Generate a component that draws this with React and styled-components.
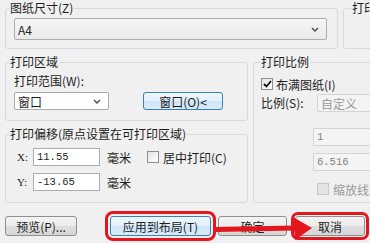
import styled, { createGlobalStyle } from 'styled-components'

const Global = createGlobalStyle`
  html, body {
    margin: 0;
    padding: 0;
    background: #f0f0f0;
  }
  body {
    font-family: "Noto Sans CJK SC", "Noto Sans", sans-serif;
    font-size: 12px;
    color: #1e1e1e;
  }
`

const Dialog = styled.div`
  position: relative;
  width: 370px;
  height: 243px;
  overflow: hidden;
  box-sizing: border-box;
  padding: 1px 0 0 5px;
  background: #f0f0f0;
`

const TopRow = styled.div`
  display: flex;
  gap: 5px;
  width: 480px;
`

const Middle = styled.div`
  display: grid;
  grid-template-columns: 243px 160px;
  column-gap: 5px;
  margin-top: 6px;
`

const Column = styled.div`
  display: flex;
  flex-direction: column;
  gap: 6px;
`

const Group = styled.fieldset`
  margin: 0;
  padding: 0;
  min-width: 0;
  width: ${p => p.$w}px;
  box-sizing: border-box;
  border: 1px solid #d6dadf;
  border-radius: 3px;
`

const Legend = styled.legend`
  margin-left: ${p => p.$indent ?? 3}px;
  padding: 0 1px;
  font-size: 12px;
  line-height: 14px;
  color: #1e1e1e;
`

const Body = styled.div`
  padding: ${p => p.$pad};
`

const Label = styled.div`
  line-height: 14px;
  white-space: nowrap;
`

const Row = styled.div`
  display: flex;
  align-items: center;
  height: ${p => p.$h ?? 18}px;
  margin-top: ${p => p.$mt ?? 0}px;
  padding-left: ${p => p.$pl ?? 0}px;
  white-space: nowrap;
`

const Combo = styled.div`
  display: flex;
  align-items: center;
  justify-content: space-between;
  flex: none;
  width: ${p => p.$w}px;
  height: ${p => p.$h ?? 18}px;
  box-sizing: border-box;
  margin-left: ${p => p.$ml ?? 0}px;
  padding: 0 7px 0 3px;
  border: 1px solid ${p => (p.$disabled ? '#d4d4d4' : '#acacac')};
  border-radius: 2px;
  background: ${p =>
    p.$disabled ? '#f4f4f4' : p.$flat ? '#ffffff' : 'linear-gradient(#f6f6f6, #e9e9e9)'};
  color: ${p => (p.$disabled ? '#9a9a9a' : '#1e1e1e')};
  font-family: ${p => (p.$mono ? '"Liberation Mono", monospace' : 'inherit')};
  font-size: ${p => (p.$mono ? '11px' : '12px')};
`

const Field = styled.input`
  flex: none;
  width: ${p => p.$w}px;
  height: 18px;
  box-sizing: border-box;
  margin: 0 0 0 ${p => p.$ml ?? 0}px;
  padding: 0 0 0 3px;
  border: 1px solid ${p => (p.$disabled ? '#d4d4d4' : '#abadb3')};
  background: ${p => (p.$disabled ? '#f4f4f4' : '#ffffff')};
  color: ${p => (p.$disabled ? '#808080' : '#1e1e1e')};
  font-family: "Liberation Mono", monospace;
  font-size: 10.5px;
  outline: none;
`

const AxisLabel = styled.span`
  width: 16px;
  font-family: "Liberation Serif", serif;
  font-size: 11px;
`

const Unit = styled.span`
  margin-left: ${p => p.$ml ?? 7}px;
  color: ${p => (p.$disabled ? '#9a9a9a' : '#1e1e1e')};
`

const Box = styled.span`
  display: inline-flex;
  align-items: center;
  justify-content: center;
  flex: none;
  width: 12px;
  height: 12px;
  box-sizing: border-box;
  margin-left: ${p => p.$ml ?? 0}px;
  border: 1px solid ${p => (p.$disabled ? '#c8c8c8' : '#8e8f8f')};
  background: ${p => (p.$disabled ? '#e4e4e4' : 'linear-gradient(135deg, #e2e2e2, #ffffff)')};
`

const Button = styled.div`
  display: flex;
  align-items: center;
  justify-content: center;
  flex: none;
  width: ${p => p.$w}px;
  height: ${p => p.$h ?? 20}px;
  box-sizing: border-box;
  margin-left: ${p => p.$ml ?? 0}px;
  border: 1px solid ${p => (p.$focus ? '#3c7fb1' : '#8f8f8f')};
  border-radius: 3px;
  background: ${p =>
    p.$focus
      ? 'linear-gradient(#eef6fd 0%, #e2f0fb 50%, #cfe6f8 51%, #d7ebfa 100%)'
      : 'linear-gradient(#f4f4f4 0%, #ececec 50%, #dedede 51%, #d6d6d6 100%)'};
  color: #1e1e1e;
  font-size: 12px;
  white-space: nowrap;
  outline: ${p => (p.$mark ? '3px solid #e3151d' : 'none')};
  outline-offset: ${p => p.$offset ?? 2}px;
`

const Buttons = styled.div`
  display: flex;
  align-items: center;
  margin-top: 13px;
`

const Overlay = styled.svg`
  position: absolute;
  left: 0;
  top: 0;
  pointer-events: none;
`

function Chevron() {
  return (
    <svg width="8" height="5" viewBox="0 0 8 5">
      <path d="M1 1l3 3 3-3" stroke="#4a4a4a" strokeWidth="1.4" fill="none" />
    </svg>
  )
}

function Tick() {
  return (
    <svg width="9" height="8" viewBox="0 0 9 8">
      <path d="M1 4l2.5 2.5L8 1" stroke="#111" strokeWidth="1.8" fill="none" />
    </svg>
  )
}

export default function App() {
  return (
    <Dialog>
      <Global />
      <TopRow>
        <Group $w={333}>
          <Legend>图纸尺寸(Z)</Legend>
          <Body $pad="3px 10px 8px 8px">
            <Combo $w={313} $h={22}>
              A4
              <Chevron />
            </Combo>
          </Body>
        </Group>
        <Group $w={80}>
          <Legend $indent={7}>打印</Legend>
        </Group>
      </TopRow>

      <Middle>
        <Column>
          <Group>
            <Legend>打印区域</Legend>
            <Body $pad="5px 8px 10px 8px">
              <Label>打印范围(W):</Label>
              <Row $mt={4}>
                <Combo $w={95} $flat>
                  窗口
                  <Chevron />
                </Combo>
                <Button $w={80} $h={18} $ml={34} $focus>
                  窗口(O)&lt;
                </Button>
              </Row>
            </Body>
          </Group>
          <Group>
            <Legend>打印偏移(原点设置在可打印区域)</Legend>
            <Body $pad="7px 8px 11px 11px">
              <Row>
                <AxisLabel>X:</AxisLabel>
                <Field $w={67} readOnly value="11.55" />
                <Unit>毫米</Unit>
                <Box $ml={16} />
                <Unit $ml={4}>居中打印(C)</Unit>
              </Row>
              <Row $mt={7}>
                <AxisLabel>Y:</AxisLabel>
                <Field $w={67} readOnly value="-13.65" />
                <Unit>毫米</Unit>
              </Row>
            </Body>
          </Group>
        </Column>

        <Group>
          <Legend $indent={6}>打印比例</Legend>
          <Body $pad="8px 0 0 7px">
            <Row $h={14}>
              <Box>
                <Tick />
              </Box>
              <Unit $ml={3}>布满图纸(I)</Unit>
            </Row>
            <Row $mt={3}>
              <Label style={{ width: 56 }}>比例(S):</Label>
              <Combo $w={80} $disabled>
                自定义
              </Combo>
            </Row>
            <Row $mt={16}>
              <Field $w={90} $ml={52} $disabled readOnly value="1" />
            </Row>
            <Row $mt={6} $h={19}>
              <Field $w={90} $ml={52} $disabled readOnly value="6.516" />
            </Row>
            <Row $mt={11} $h={14}>
              <Box $ml={56} $disabled />
              <Unit $ml={4} $disabled>缩放线宽(L)</Unit>
            </Row>
          </Body>
        </Group>
      </Middle>

      <Buttons>
        <Button $w={72}>预览(P)...</Button>
        <Button $w={101} $ml={33} $focus $mark>
          应用到布局(T)
        </Button>
        <Button $w={69} $ml={7}>确定</Button>
        <Button $w={70} $ml={8} $mark $offset={1}>
          取消
        </Button>
      </Buttons>

      <Overlay width="370" height="243" viewBox="0 0 370 243">
        <polygon points="216,227 295,225.5 295,230.5 216,232" fill="#e3151d" />
        <polygon points="293,217 312,228 295,240" fill="#e3151d" />
      </Overlay>
    </Dialog>
  )
}
